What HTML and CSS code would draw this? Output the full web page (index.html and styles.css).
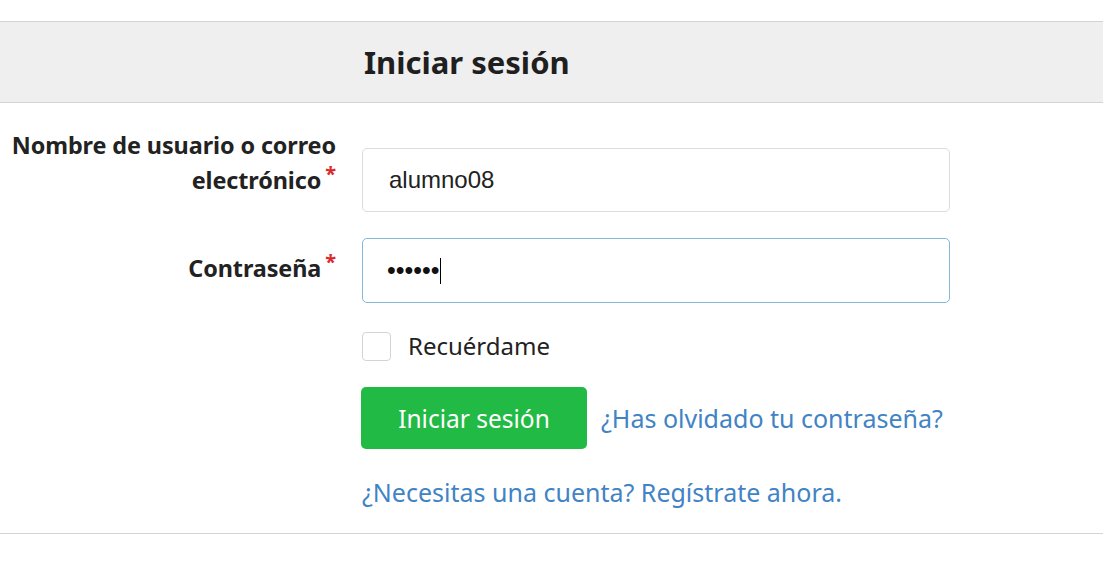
FILE: index.html
```html
<!DOCTYPE html>
<html lang="es">
<head>
<meta charset="utf-8">
<title>Iniciar sesión</title>
<link rel="stylesheet" href="styles.css">
</head>
<body>
<div class="page">
  <div class="header">
    <div class="spacer"></div>
    <h1 class="title">Iniciar sesión</h1>
  </div>
  <form class="form">
    <div class="row row-user">
      <label class="label label-user">Nombre de usuario o correo electrónico<span class="req">*</span></label>
      <input class="input" type="text" value="alumno08">
    </div>
    <div class="row row-pass">
      <label class="label label-pass">Contraseña<span class="req">*</span></label>
      <div class="input input-focus"><span class="dots">••••••</span><span class="caret"></span></div>
    </div>
    <div class="row row-check">
      <div class="spacer"></div>
      <div class="check-wrap"><span class="checkbox"></span><span class="check-label">Recuérdame</span></div>
    </div>
    <div class="row row-btn">
      <div class="spacer"></div>
      <div class="actions"><button type="button" class="btn">Iniciar sesión</button><a class="link" href="#">¿Has olvidado tu contraseña?</a></div>
    </div>
    <div class="row row-reg">
      <div class="spacer"></div>
      <div class="reg"><a class="link" href="#">¿Necesitas una cuenta? Regístrate ahora.</a></div>
    </div>
  </form>
</div>
</body>
</html>
```
FILE: styles.css
```css
html, body {
  margin: 0;
  padding: 0;
  background: #fff;
}
body {
  font-family: "Noto Sans", "Open Sans", sans-serif;
  color: #222;
}
.page {
  padding-top: 21px;
}
.header {
  display: grid;
  grid-template-columns: 336px 588px;
  column-gap: 28px;
  background: #efefef;
  border-top: 1px solid #d4d4d5;
  border-bottom: 1px solid #d4d4d5;
  height: 80px;
  align-items: center;
}
.title {
  margin: 0;
  font-size: 31px;
  font-weight: 700;
  color: #1f1f1f;
  line-height: 40px;
}
.form {
  margin: 0;
  padding-top: 25px;
  padding-bottom: 20px;
  border-bottom: 1px solid #d4d4d5;
}
.row {
  display: grid;
  grid-template-columns: 336px 588px;
  column-gap: 26px;
}
.label {
  text-align: right;
  font-size: 23.4px;
  font-weight: 700;
  line-height: 35px;
  color: #222;
  letter-spacing: -0.1px;
}
.req {
  color: #db2828;
  font-size: 20px;
  line-height: 0;
  position: relative;
  top: -8px;
  margin-left: 4px;
}
.input {
  box-sizing: border-box;
  height: 64px;
  width: 588px;
  border: 1px solid #dcdcdc;
  border-radius: 5px;
  padding: 0 26px;
  font-family: "Liberation Sans", Arial, sans-serif;
  font-size: 24px;
  color: #222;
  background: #fff;
  outline: none;
  display: flex;
  align-items: center;
}
.row-user .input {
  margin-top: 20px;
}
.row-pass {
  margin-top: 26px;
}
.label-pass {
  padding-top: 13px;
}
.input-focus {
  border-color: #85b7d9;
  height: 65px;
  padding-left: 24px;
}
.dots {
  font-family: "Liberation Sans", Arial, sans-serif;
  font-size: 25px;
  color: #111;
}
.caret {
  display: inline-block;
  width: 1px;
  height: 26px;
  background: #000;
  margin-left: 0;
}
.row-check {
  margin-top: 28px;
}
.check-wrap {
  display: flex;
  align-items: center;
}
.checkbox {
  box-sizing: border-box;
  width: 29px;
  height: 29px;
  border: 1px solid #d4d4d5;
  border-radius: 4px;
  background: #fff;
}
.check-label {
  margin-left: 17px;
  font-size: 24px;
  color: #222;
  line-height: 30px;
}
.row-btn {
  margin-top: 26px;
}
.actions {
  display: flex;
  align-items: center;
  margin-left: -1px;
}
.btn {
  width: 226px;
  height: 62px;
  border: 0;
  border-radius: 5px;
  background: #21ba45;
  color: #fff;
  font-family: "Noto Sans", "Open Sans", sans-serif;
  font-size: 24.5px;
  padding: 0;
  margin-right: 14px;
}
.link {
  color: #4183c4;
  text-decoration: none;
  font-size: 25px;
}
.reg {
  line-height: 34px;
}
.row-reg {
  margin-top: 26px;
}
```
